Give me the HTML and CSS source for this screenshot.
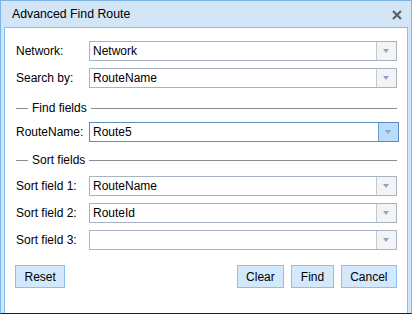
FILE: index.html
```html
<!DOCTYPE html>
<html lang="en">
<head>
    <meta charset="UTF-8">
    <meta name="viewport" content="width=device-width, initial-scale=1.0">
    <title>Advanced Find Route</title>
    <link rel="stylesheet" href="styles.css">
</head>
<body>
    <div class="dialog">
        <div class="dialog-title">
            <span>Advanced Find Route</span>
            <span class="close-btn">
                <svg width="10" height="10" viewBox="0 0 10 10"><path d="M1 1 L9 9 M9 1 L1 9" stroke="#5e5e5e" stroke-width="2.2"/></svg>
            </span>
        </div>
        <div class="dialog-content">
            <div class="form-row">
                <label>Network:</label>
                <div class="select"><span class="select-text">Network</span><span class="select-arrow"></span></div>
            </div>
            <div class="form-row">
                <label>Search by:</label>
                <div class="select"><span class="select-text">RouteName</span><span class="select-arrow"></span></div>
            </div>

            <div class="legend legend-find"><span class="legend-lead"></span><span>Find fields</span><span class="legend-line"></span></div>
            <div class="form-row">
                <label>RouteName:</label>
                <div class="select focused"><span class="select-text">Route5</span><span class="select-arrow"></span></div>
            </div>

            <div class="legend legend-sort"><span class="legend-lead"></span><span>Sort fields</span><span class="legend-line"></span></div>
            <div class="form-row">
                <label>Sort field 1:</label>
                <div class="select"><span class="select-text">RouteName</span><span class="select-arrow"></span></div>
            </div>
            <div class="form-row">
                <label>Sort field 2:</label>
                <div class="select"><span class="select-text">RouteId</span><span class="select-arrow"></span></div>
            </div>
            <div class="form-row">
                <label>Sort field 3:</label>
                <div class="select"><span class="select-text"></span><span class="select-arrow"></span></div>
            </div>

            <div class="button-bar">
                <button>Reset</button>
                <div class="button-group">
                    <button>Clear</button>
                    <button>Find</button>
                    <button>Cancel</button>
                </div>
            </div>
        </div>
    </div>
</body>
</html>
```

FILE: styles.css
```css
body {
    margin: 0;
    font-family: Arial, "Liberation Sans", sans-serif;
    font-size: 12px;
    color: #000;
}
.dialog {
    width: 412px;
    height: 314px;
    box-sizing: border-box;
    display: flex;
    flex-direction: column;
    background-color: #d2e6f8;
    border: 1px solid #7db3e6;
    border-bottom: 1px solid #1c1c1c;
    padding: 0 3px;
}
.dialog-title {
    height: 26px;
    display: flex;
    align-items: center;
    justify-content: space-between;
    padding: 0 6px 0 8px;
    font-size: 12.3px;
}
.close-btn {
    display: flex;
    margin-top: 2px;
}
.dialog-content {
    flex: 1;
    display: flex;
    flex-direction: column;
    background-color: #fff;
    border: 1px solid #88bdef;
    border-bottom: none;
    padding: 13px 10px 0 10px;
}
.form-row {
    display: flex;
    align-items: center;
    height: 20px;
    margin-bottom: 7px;
}
.form-row label {
    width: 73px;
    flex-shrink: 0;
    padding-left: 1px;
}
.select {
    flex: 1;
    height: 20px;
    box-sizing: border-box;
    display: flex;
    border: 1px solid #a9b4c2;
    background-color: #fff;
}
.select-text {
    flex: 1;
    padding-left: 3px;
    line-height: 18px;
}
.select-arrow {
    width: 19px;
    border-left: 1px solid #c3c9d2;
    background-color: #f4f4f4;
    position: relative;
}
.select-arrow::after {
    content: "";
    position: absolute;
    left: 6px;
    top: 7px;
    border-left: 3.5px solid transparent;
    border-right: 3.5px solid transparent;
    border-top: 4px solid #8aa4cd;
}
.select.focused {
    border-color: #5d8cbd;
    margin-right: -2px;
}
.select.focused .select-arrow {
    background-color: #b9dcf8;
    border-left: 1px solid #6e9ccb;
}
.legend {
    display: flex;
    align-items: center;
    height: 16px;
    margin-left: 1px;
}
.legend-lead {
    width: 12px;
    border-top: 1px solid #8c8c8c;
    margin-right: 4px;
}
.legend-line {
    flex: 1;
    border-top: 1px solid #8c8c8c;
    margin-left: 4px;
}
.legend-find {
    margin-top: 5px;
    margin-bottom: 6px;
}
.legend-sort {
    margin-top: 3px;
    margin-bottom: 8px;
}
.button-bar {
    display: flex;
    justify-content: space-between;
    margin-top: 8px;
}
.button-group {
    display: flex;
    gap: 7px;
}
.button-bar button {
    height: 23px;
    padding: 0 8.5px;
    font-family: Arial, "Liberation Sans", sans-serif;
    font-size: 12px;
    color: #000;
    background-color: #d3e8fb;
    border: 1px solid #89c1ef;
    border-radius: 0;
}
```
